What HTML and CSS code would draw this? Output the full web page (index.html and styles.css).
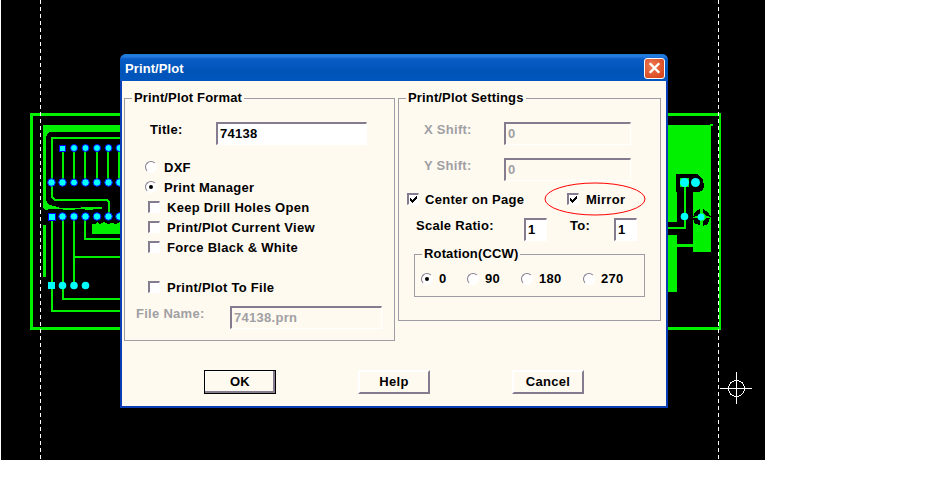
FILE: index.html
```html
<!DOCTYPE html>
<html lang="en">
<head>
<meta charset="utf-8">
<title>Print/Plot</title>
<link rel="stylesheet" href="styles.css">
</head>
<body>
<main class="canvas">
  <svg class="board" viewBox="1 0 764 460" width="764" height="460" xmlns="http://www.w3.org/2000/svg">
    <g class="cu">
      <!-- outline -->
      <rect x="30" y="113" width="3" height="217"/>
      <rect x="30" y="113" width="691" height="3"/>
      <rect x="30" y="327" width="691" height="3"/>
      <rect x="719" y="113" width="2" height="217"/>
      <!-- left copper -->
      <polygon points="43,125 125,125 125,132 50,132 47,134 46,138 46,200 49,205 55,206 60,208 102,207 102,209 96,209 90,210 80,209 70,210 55,209 50,209 46,210 43,208"/>
      <rect x="43" y="225" width="3" height="52"/>
      <rect x="51" y="137" width="2" height="60"/>
      <rect x="51" y="137" width="74" height="2"/>
      <polygon points="51,196 53,196 53,197 55,199 107,199 110,202 110,215 108,215 108,203 106,201 54,201 51,198"/>
      <rect x="62" y="148" width="2" height="34"/>
      <rect x="73" y="148" width="2" height="34"/>
      <rect x="84" y="148" width="2" height="34"/>
      <rect x="96" y="148" width="2" height="34"/>
      <rect x="107" y="148" width="2" height="34"/>
      <rect x="118" y="148" width="2" height="34"/>
      <rect x="51" y="216" width="2" height="96"/>
      <rect x="51" y="310" width="74" height="2"/>
      <rect x="62" y="216" width="2" height="84"/>
      <rect x="62" y="298" width="63" height="2"/>
      <rect x="73" y="216" width="2" height="69"/>
      <rect x="74" y="256" width="51" height="2"/>
      <rect x="84" y="216" width="2" height="24"/>
      <rect x="84" y="238" width="41" height="2"/>
      <polygon points="92,224 96,224 97,222 100,224 104,222 108,224 112,223 116,224 120,222 125,222 125,234 92,234"/>
      <!-- right copper -->
      <polygon points="665,125 711,125 711,252 693,252 693,192 699,192 703,190 704,186 703,180 700,177 697,174 676,174 676,192 677,192 677,222 665,222"/>
      <rect x="710" y="124" width="3" height="2"/>
      <rect x="665" y="227" width="21" height="2"/>
      <rect x="684" y="182" width="2" height="47"/>
      <rect x="665" y="235" width="12" height="57"/>
      <rect x="677" y="244" width="16" height="3"/>
      <rect x="680" y="178" width="9" height="9"/>
    </g>
    <g class="void">
      <polygon points="693,217 695,212 700,209 700,213 697,216"/>
      <polygon points="703,209 708,212 711,217 706,216 703,213"/>
      <polygon points="693,218 697,218 700,221 700,225 695,224"/>
      <polygon points="706,218 710,218 708,224 703,226 703,221"/>
    </g>
    <!-- pads -->
    <g class="pad">
      <rect x="59" y="145" width="6" height="6"/>
      <circle cx="74" cy="148" r="3.5"/><circle cx="85.5" cy="148" r="3.5"/><circle cx="97" cy="148" r="3.5"/>
      <circle cx="108.5" cy="148" r="3.5"/><circle cx="119.5" cy="148" r="3.5"/>
      <circle cx="51.5" cy="182.5" r="3.8"/><circle cx="62.5" cy="182.5" r="3.8"/><circle cx="74" cy="182.5" r="3.5"/>
      <circle cx="85.5" cy="182.5" r="3.8"/><circle cx="97" cy="182.5" r="3.8"/><circle cx="108.5" cy="182.5" r="3.8"/><circle cx="119.5" cy="182.5" r="3.8"/>
      <rect x="48" y="213" width="7" height="7"/>
      <circle cx="62.5" cy="216.5" r="3.8"/><circle cx="74" cy="216.5" r="3.8"/><circle cx="85.5" cy="216.5" r="3.8"/>
      <circle cx="97" cy="216.5" r="3.8"/><circle cx="108.5" cy="216.5" r="3.8"/><circle cx="119.5" cy="216.5" r="3.8"/>
      <rect x="48" y="282" width="7" height="7" class="plain"/>
      <circle cx="62.5" cy="285.5" r="3.8" class="plain"/><circle cx="74" cy="285.5" r="3.8" class="plain"/><circle cx="85.5" cy="285.5" r="3.8" class="plain"/>
      <circle cx="684.5" cy="182.5" r="4.5" class="plain"/>
      <circle cx="695.5" cy="182.5" r="4.5" class="plain"/>
      <circle cx="684.5" cy="216.5" r="3.8" class="plain"/>
      <circle cx="701" cy="217" r="3.5" class="plain"/>
    </g>
    <!-- guides -->
    <line class="guide" x1="40.5" y1="0" x2="40.5" y2="460"/>
    <line class="guide" x1="718.5" y1="0" x2="718.5" y2="460"/>
    <!-- cursor -->
    <g class="cursor">
      <line x1="720" y1="388.5" x2="752" y2="388.5"/>
      <line x1="736.5" y1="372" x2="736.5" y2="404"/>
      <circle cx="736.5" cy="388.5" r="8"/>
    </g>
  </svg>

  <section class="dialog">
    <header class="titlebar">
      <span class="title">Print/Plot</span>
      <span class="close">
        <svg viewBox="0 0 20 20" width="20" height="20" xmlns="http://www.w3.org/2000/svg"><path d="M5 5 L15 15 M15 5 L5 15" stroke="#fff" stroke-width="2.6" fill="none"/></svg>
      </span>
    </header>
    <div class="body">
      <div class="groups">
        <fieldset class="group group-format">
          <legend>Print/Plot Format</legend>
          <div class="row title-row"><span class="lbl title-lbl">Title:</span><span class="field field-title">74138</span></div>
          <div class="row opt opt-radio first-opt"><span class="radio"></span>DXF</div>
          <div class="row opt opt-radio"><span class="radio on"></span>Print Manager</div>
          <div class="row opt opt-check"><span class="check"></span>Keep Drill Holes Open</div>
          <div class="row opt opt-check"><span class="check"></span>Print/Plot Current View</div>
          <div class="row opt opt-check"><span class="check"></span>Force Black &amp; White</div>
          <div class="row opt opt-check gap-above"><span class="check"></span>Print/Plot To File</div>
          <div class="row file-row"><span class="lbl off file-lbl">File Name:</span><span class="field field-file disabled">74138.prn</span></div>
        </fieldset>

        <fieldset class="group group-settings">
          <legend>Print/Plot Settings</legend>
          <div class="row shift-row"><span class="lbl off shift-lbl">X Shift:</span><span class="field field-shift disabled">0</span></div>
          <div class="row shift-row second"><span class="lbl off shift-lbl">Y Shift:</span><span class="field field-shift disabled">0</span></div>
          <div class="row center-row">
            <span class="check"><svg class="tick" viewBox="0 0 7 7" width="7" height="7" xmlns="http://www.w3.org/2000/svg"><path d="M0 2h1v1h1v1h1V3h1V2h1V1h1V0h1v3H6v1H5v1H4v1H3v1H2V6H1V5H0z"/></svg></span>
            <span class="center-lbl">Center on Page</span>
            <span class="mirror">
              <span class="check"><svg class="tick" viewBox="0 0 7 7" width="7" height="7" xmlns="http://www.w3.org/2000/svg"><path d="M0 2h1v1h1v1h1V3h1V2h1V1h1V0h1v3H6v1H5v1H4v1H3v1H2V6H1V5H0z"/></svg></span>
              <span>Mirror</span>
              <svg class="ring" viewBox="0 0 102 34" width="102" height="34" xmlns="http://www.w3.org/2000/svg"><ellipse cx="51" cy="17" rx="50" ry="16" fill="none" stroke="#f00"/></svg>
            </span>
          </div>
          <div class="row scale-row">
            <span class="lbl scale-lbl">Scale Ratio:</span><span class="field field-scale">1</span>
            <span class="lbl to-lbl">To:</span><span class="field field-scale">1</span>
          </div>
          <fieldset class="group group-rotation">
            <legend>Rotation(CCW)</legend>
            <div class="rot-row">
              <span class="rot rot-0"><span class="radio on"></span>0</span>
              <span class="rot rot-90"><span class="radio"></span>90</span>
              <span class="rot rot-180"><span class="radio"></span>180</span>
              <span class="rot"><span class="radio"></span>270</span>
            </div>
          </fieldset>
        </fieldset>
      </div>
      <div class="buttons">
        <button class="btn default" type="button">OK</button>
        <button class="btn" type="button">Help</button>
        <button class="btn" type="button">Cancel</button>
      </div>
    </div>
  </section>
</main>
</body>
</html>
```

FILE: styles.css
```css
* { box-sizing: border-box; }
html, body { margin: 0; padding: 0; background: #fff; }
body {
  padding-left: 1px;
  width: 952px;
  height: 482px;
  overflow: hidden;
  font: 700 13px/14px "Liberation Sans", Arial, sans-serif;
  letter-spacing: 0.28px;
  color: #000;
}
.canvas { position: relative; width: 764px; height: 460px; background: #000; }
.board { display: block; shape-rendering: crispEdges; }
.cu { fill: #00f000; }
.void { fill: #000; }
.pad { fill: #00ffff; stroke: #0000ff; stroke-width: 1; }
.pad circle { shape-rendering: auto; }
.pad .plain { stroke: none; }
.guide { stroke: #fff; stroke-width: 1; stroke-dasharray: 4 3; }
.cursor { stroke: #fff; stroke-width: 1; fill: none; }

.dialog {
  position: absolute;
  left: 119px;
  top: 54px;
  width: 548px;
  height: 354px;
  display: flex;
  flex-direction: column;
  background: #0a3db4;
  border-radius: 6px 6px 0 0;
  overflow: hidden;
}
.titlebar {
  height: 27px;
  flex: none;
  display: flex;
  align-items: center;
  justify-content: space-between;
  padding: 0 3px 3px 5px;
  background: linear-gradient(180deg, #1c86c4 0, #1c74dc 1px, #2a80e6 2px, #0a5cc6 5px, #0054b8 60%, #0056be 100%);
}
.title { color: #fff; font-size: 13px; letter-spacing: 0.1px; margin-top: 6px; }
.close {
  width: 21px;
  height: 21px;
  margin-top: 4px;
  display: flex;
  align-items: center;
  justify-content: center;
  border: 1px solid #fff;
  border-radius: 3px;
  background: radial-gradient(circle at 35% 35%, #ee7a52, #d8481f 80%);
}
.body {
  flex: 1;
  margin: 0 2px 2px;
  background: #fffaf0;
  padding: 10px 0 0 2px;
}
.groups { display: flex; align-items: flex-start; gap: 3px; }
.group { margin: 0; min-width: 0; border: 1px solid #9e9ca4; padding: 0; }
.group legend { margin-left: 7px; padding: 0 2px; line-height: 14px; letter-spacing: 0.15px; }
.group-format { width: 271px; height: 250px; padding-top: 17px; }
.group-settings { width: 263px; height: 230px; padding-top: 17px; position: relative; }
.group-rotation { width: 231px; height: 50px; margin: 6px 0 0 15px; }

.row { display: flex; align-items: center; }
.lbl.off { color: #a0a0a4; }
.field {
  display: flex;
  align-items: center;
  height: 23px;
  padding: 0 0 0 2px;
  background: #fff;
  border: 2px solid #fffaf0;
  border-top-color: #857c90;
  border-left-color: #857c90;
  border-right: 1px solid #fff;
  border-bottom: 1px solid #fff;
}
.field.disabled { background: #fffaf0; color: #a0a0a4; }
.title-row { height: 23px; }
.title-lbl { width: 66px; margin-left: 25px; margin-top: -7px; }
.field-title { width: 151px; }
.opt { height: 20px; padding-top: 2px; }
.opt-radio { padding-left: 20px; }
.opt-radio .radio { margin: -2px 7px 0 0; }
.opt-check { padding-left: 23px; }
.opt-check .check { margin: -2px 7px 0 0; }
.first-opt { margin-top: 12px; }
.gap-above { margin-top: 20px; }
.file-row { margin-top: 9px; }
.file-lbl { width: 94px; margin-left: 11px; margin-top: -7px; }
.field-file { width: 152px; }

.radio {
  flex: none;
  position: relative;
  display: inline-block;
  width: 12px;
  height: 12px;
  border-radius: 50%;
  background: #fff;
  border: 1px solid #fff;
  border-top-color: #857c90;
  border-left-color: #857c90;
}
.radio.on::after {
  content: "";
  position: absolute;
  left: 3px;
  top: 3px;
  width: 4px;
  height: 4px;
  border-radius: 50%;
  background: #000;
}
.check {
  flex: none;
  display: inline-flex;
  align-items: center;
  justify-content: center;
  width: 12px;
  height: 12px;
  background: #fff;
  border: 1px solid #fff;
  border-top: 2px solid #857c90;
  border-left: 2px solid #857c90;
}
.tick { display: block; fill: #000; shape-rendering: crispEdges; }

.shift-row { height: 23px; }
.shift-row.second { margin-top: 13px; }
.shift-lbl { width: 80px; margin-left: 25px; margin-top: -7px; }
.field-shift { width: 127px; }
.center-row { height: 20px; margin-top: 8px; padding: 2px 0 0 8px; }
.center-row .check { margin-top: -2px; }
.center-lbl { margin-left: 6px; width: 142px; }
.mirror { display: flex; align-items: center; gap: 7px; position: relative; }
.ring { position: absolute; left: -23px; top: -11px; }
.scale-row { height: 23px; margin-top: 9px; }
.scale-lbl { width: 108px; margin-left: 17px; margin-top: -7px; }
.to-lbl { width: 44px; margin-left: 23px; margin-top: -7px; }
.field-scale { width: 23px; }

.rot-row { display: flex; align-items: center; height: 20px; margin-top: 8px; padding-left: 6px; }
.rot { display: flex; align-items: center; gap: 6px; }
.rot .radio { margin-top: -1px; }
.rot-0 { width: 46px; }
.rot-90 { width: 54px; }
.rot-180 { width: 62px; }

.buttons { display: flex; gap: 82px; margin-top: 29px; padding-left: 80px; }
.btn {
  width: 72px;
  height: 24px;
  padding: 0;
  font: inherit;
  letter-spacing: inherit;
  color: #000;
  background: #fffaf0;
  border: 2px solid #fff;
  border-right-color: #857c90;
  border-bottom-color: #857c90;
}
.btn.default {
  border: 1px solid #000;
  box-shadow: inset -2px -2px 0 #857c90, inset 1px 1px 0 #fff;
}
```
